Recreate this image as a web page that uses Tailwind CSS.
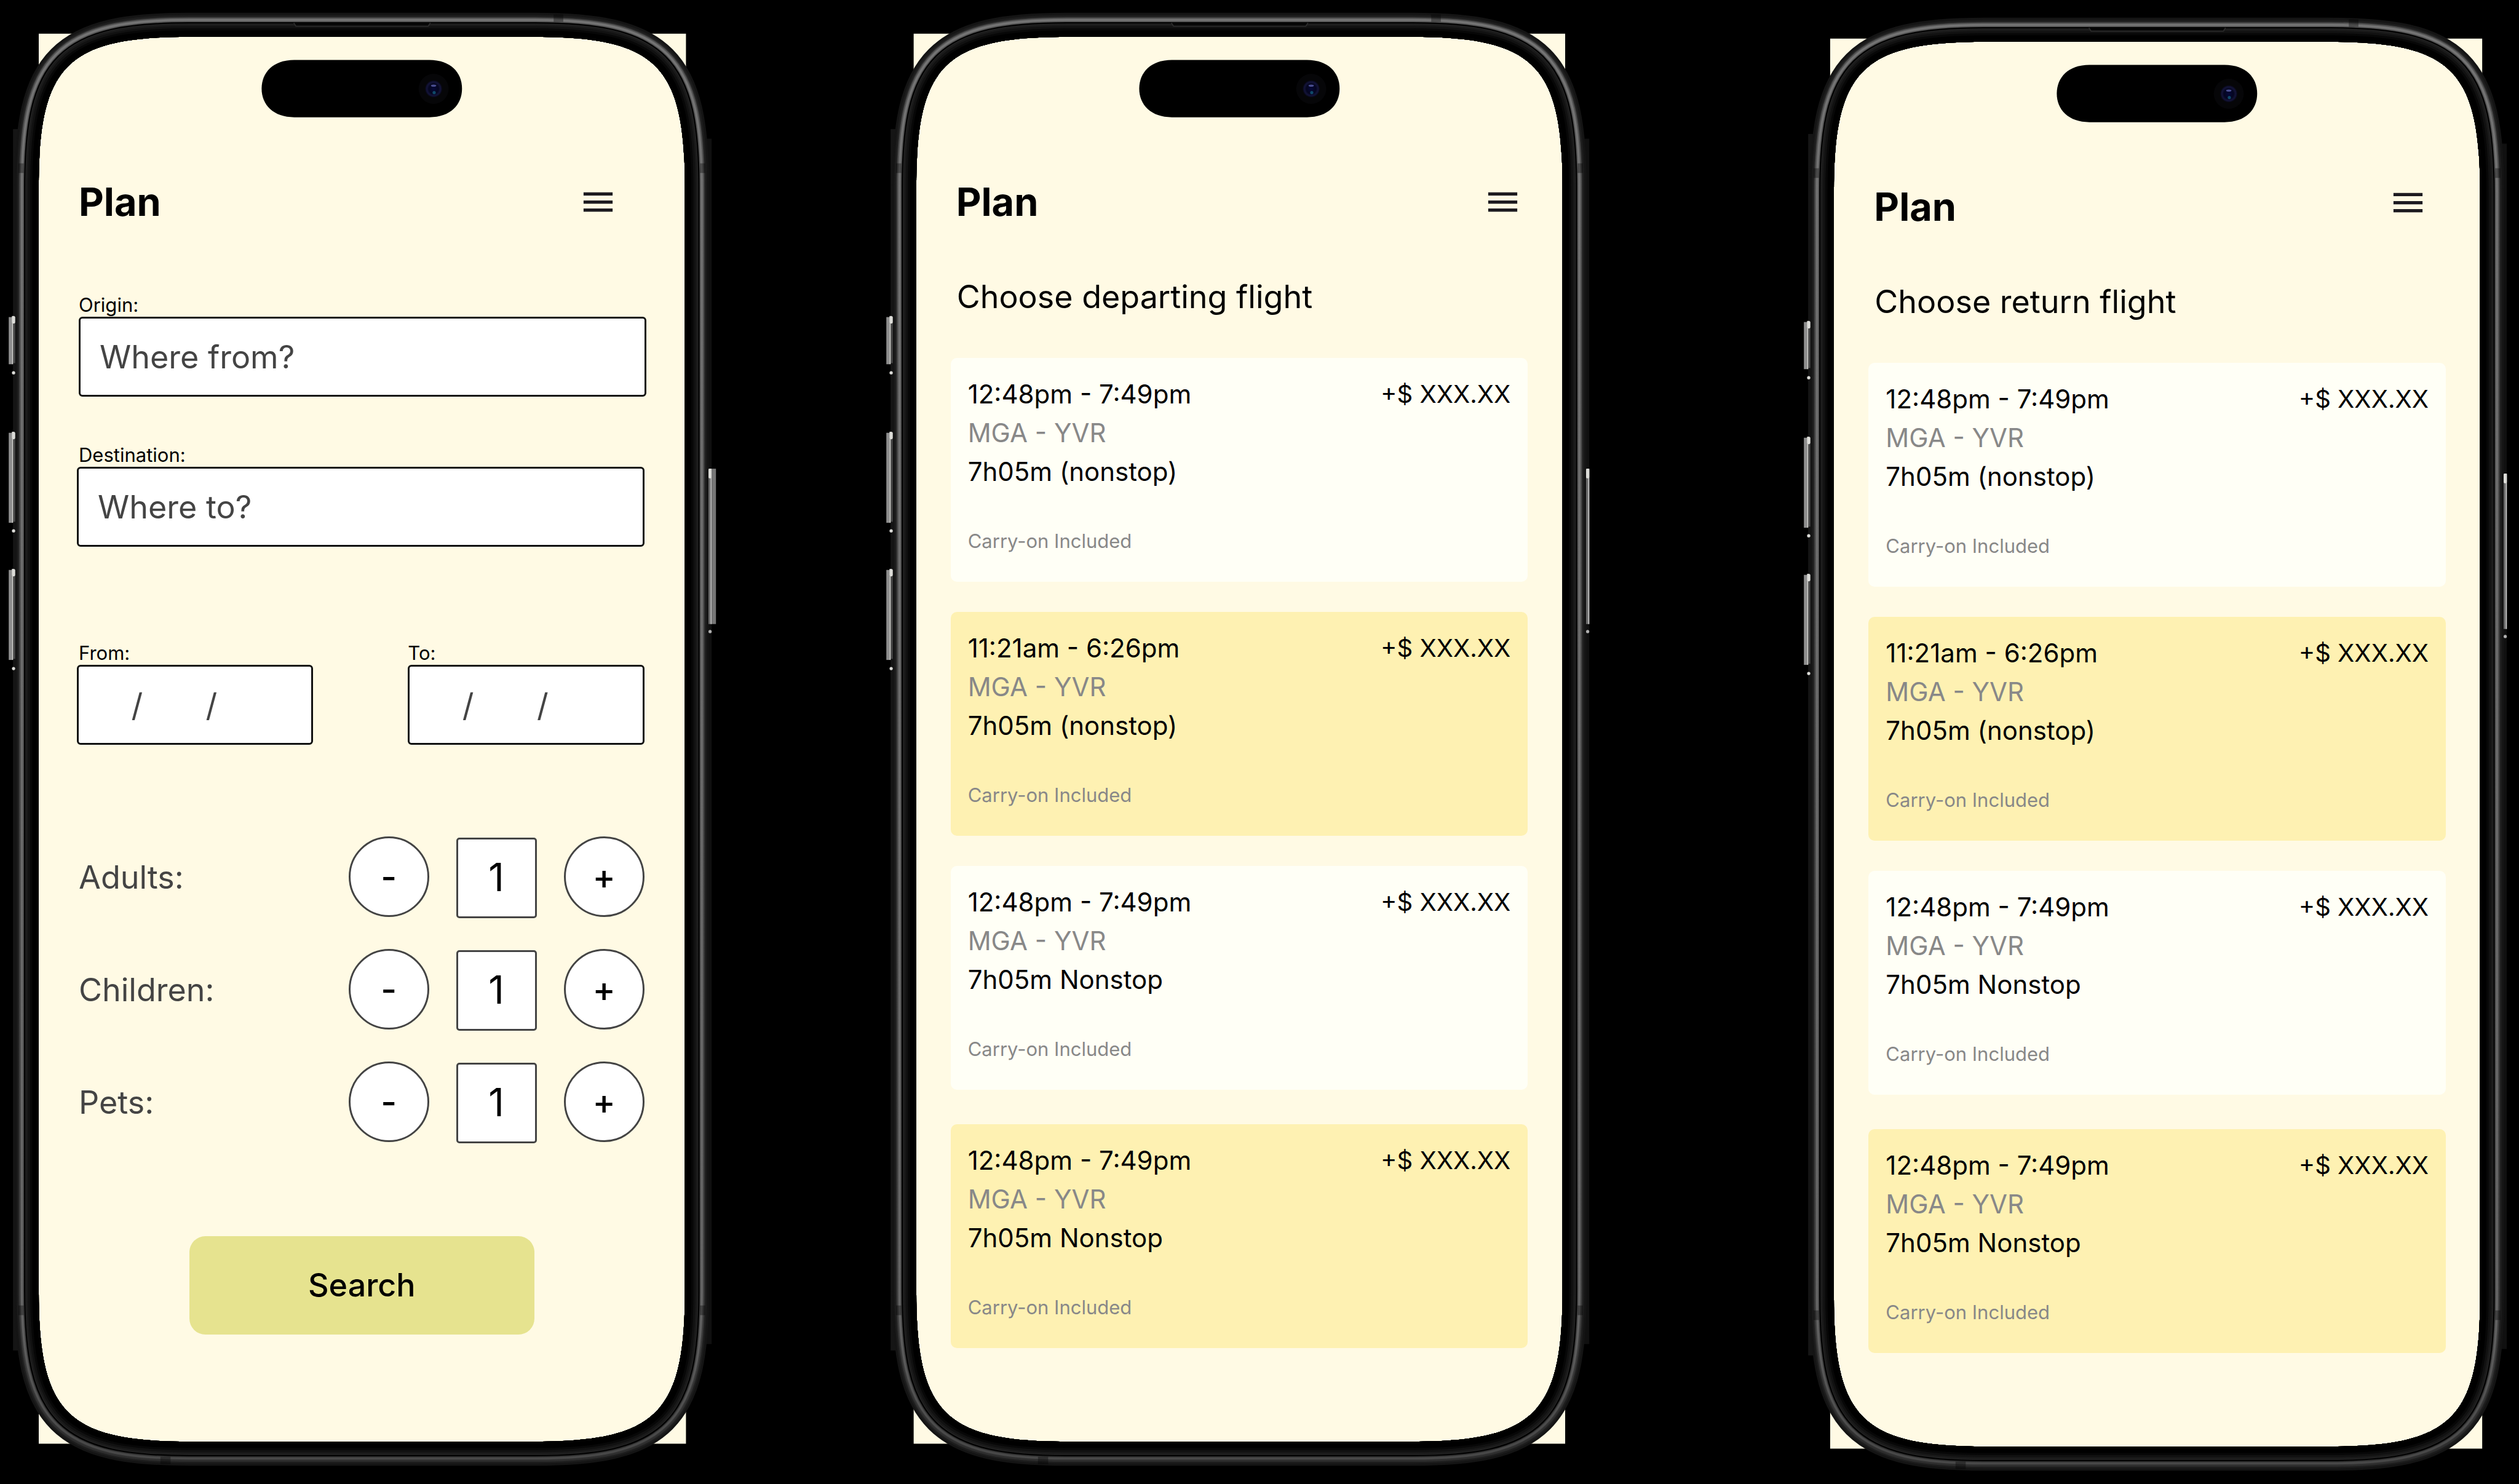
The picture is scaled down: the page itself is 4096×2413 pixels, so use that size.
<!DOCTYPE html>
<html lang="en">
<head>
<meta charset="utf-8">
<meta name="viewport" content="width=device-width, initial-scale=1">
<title>Plan</title>
<script src="https://cdn.jsdelivr.net/npm/@tailwindcss/browser@4"></script>
</head>
<body class="bg-black text-black font-[Inter,sans-serif]">

<!-- Shared phone artwork -->
<svg class="absolute size-0" aria-hidden="true">
  <defs>
    <linearGradient id="metal" gradientUnits="userSpaceOnUse" x1="0" y1="0" x2="0" y2="2622">
      <stop offset="0" stop-color="#747474"/><stop offset="0.9" stop-color="#666"/><stop offset="1" stop-color="#484848"/>
    </linearGradient>
    <linearGradient id="metal-edge" gradientUnits="userSpaceOnUse" x1="0" y1="0" x2="0" y2="2622">
      <stop offset="0" stop-color="#545454"/><stop offset="0.9" stop-color="#444"/><stop offset="1" stop-color="#303030"/>
    </linearGradient>
    <radialGradient id="lens">
      <stop offset="0" stop-color="#06083a"/><stop offset="0.55" stop-color="#05061f"/><stop offset="0.8" stop-color="#14143a"/><stop offset="1" stop-color="#060610"/>
    </radialGradient>
    <path id="outline" d="M280 0H926C1153 0 1206 53 1206 280V2342C1206 2569 1153 2622 926 2622H280C53 2622 0 2569 0 2342V280C0 53 53 0 280 0Z"/>
    <clipPath id="outside">
      <path clip-rule="evenodd" d="M-100 -100H1306V2722H-100ZM280 0H926C1153 0 1206 53 1206 280V2342C1206 2569 1153 2622 926 2622H280C53 2622 0 2569 0 2342V280C0 53 53 0 280 0Z"/>
    </clipPath>
    <g id="frame" fill="none">
      <rect x="-48" y="172" width="10" height="2280" fill="#151515"/>
      <rect x="1244" y="190" width="12" height="2250" fill="#101010"/>
      <use href="#outline" stroke="#141414" stroke-width="90"/>
      <use href="#outline" stroke="#1c1c1c" stroke-width="82"/>
      <use href="#outline" stroke="#2b2b2b" stroke-width="76"/>
      <use href="#outline" stroke="url(#metal-edge)" stroke-width="72"/>
      <use href="#outline" stroke="url(#metal)" stroke-width="67"/>
      <use href="#outline" stroke="url(#metal-edge)" stroke-width="59"/>
      <use href="#outline" stroke="#000" stroke-width="55"/>
      <use href="#outline" stroke="#242424" stroke-width="50"/>
      <use href="#outline" stroke="#1a1a1a" stroke-width="47"/>
      <use href="#outline" stroke="#111" stroke-width="40"/>
      <use href="#outline" stroke="#070707" stroke-width="32"/>
      <use href="#outline" stroke="#000" stroke-width="24"/>
      <path d="M476 -26L480 -20H727L731 -26" stroke="#2c2c2c" stroke-width="2" fill="#070707"/>
      <g fill="#000" fill-opacity="0.35">
        <rect x="961" y="-42" width="18" height="14"/>
        <rect x="-38" y="236" width="10" height="18"/><rect x="1234" y="236" width="10" height="18"/>
        <rect x="-38" y="2368" width="10" height="18"/><rect x="1234" y="2368" width="10" height="18"/>
        <rect x="227" y="2650" width="19" height="14"/>
      </g>
    </g>
    <g id="buttons">
      <g fill="#8e8e8e">
        <rect x="-56" y="523" width="6" height="88"/><rect x="-56" y="739" width="6" height="168"/><rect x="-56" y="995" width="6" height="168"/>
      </g>
      <g fill="#4a4a4a">
        <rect x="-48" y="523" width="4" height="86"/><rect x="-48" y="739" width="4" height="166"/><rect x="-48" y="995" width="4" height="166"/>
      </g>
      <g fill="#dcdcd8">
        <rect x="-50" y="521" width="2" height="90"/><rect x="-50" y="737" width="2" height="170"/><rect x="-50" y="993" width="2" height="170"/>
        <rect x="-50" y="521" width="6" height="14" rx="3"/><rect x="-50" y="737" width="6" height="14" rx="3"/><rect x="-50" y="993" width="6" height="14" rx="3"/>
        <circle cx="-47" cy="627" r="3"/><circle cx="-47" cy="922" r="3"/><circle cx="-47" cy="1179" r="3"/>
      </g>
      <rect x="1250" y="806" width="6" height="290" fill="#6a6a6a"/>
      <rect x="1254" y="806" width="2" height="290" fill="#c8c8c8"/>
      <rect x="1250" y="806" width="6" height="18" rx="2" fill="#dcdcd8"/>
      <circle cx="1253" cy="1110" r="3" fill="#b0b0b0"/>
    </g>
    <g id="island">
      <path d="M477 43H729C768 43 790 66 790 96.500S768 150 729 150H477C438 150 416 127 416 96.500S438 43 477 43Z" fill="#000"/>
      <circle cx="737" cy="97" r="28" fill="#060608"/>
      <circle cx="737" cy="97" r="16" fill="url(#lens)"/>
      <ellipse cx="737" cy="91" rx="5" ry="2" fill="#4a4e90"/>
      <circle cx="738" cy="104" r="3" fill="#0f4a6a"/>
    </g>
  </defs>
</svg>

<main class="flex min-h-screen items-start overflow-hidden pt-[60px] pr-[63px] pb-[61px] pl-[63px]">

  <!-- Search form -->
  <section class="relative flex-1 bg-[#fffae4] pt-[230px] pb-[174px]">
    <header class="flex h-[76px] items-center justify-between pr-[110px] pl-[65px]">
      <h1 class="text-[63px] leading-[76px] font-bold">Plan</h1>
      <button type="button" aria-label="Menu" class="size-[63px]">
        <svg viewBox="0 0 24 24" class="size-full" fill="#1d1b20"><path d="M3 18v-2h18v2H3Zm0-5v-2h18v2H3Zm0-5V6h18v2H3Z"/></svg>
      </button>
    </header>

    <form class="mt-[111px] pr-[66px] pl-[62px]">
      <div class="-mr-[3px] ml-[3px] flex flex-col">
        <label for="origin" class="text-[31px] leading-[38px]">Origin:</label>
        <input id="origin" type="text" placeholder="Where from?" class="h-[130px] w-full rounded-[6px] border-3 border-[#111] bg-white px-[31px] text-[52px] text-[#444] placeholder:text-[#444]">
      </div>

      <div class="mt-[76px] flex flex-col">
        <label for="destination" class="pl-[3px] text-[31px] leading-[38px]">Destination:</label>
        <input id="destination" type="text" placeholder="Where to?" class="h-[130px] w-full rounded-[6px] border-3 border-[#111] bg-white px-[31px] text-[52px] text-[#444] placeholder:text-[#444]">
      </div>

      <div class="mt-[154px] flex justify-between gap-[154px]">
        <div class="flex min-w-0 flex-1 flex-col">
          <label for="from" class="pl-[3px] text-[31px] leading-[38px]">From:</label>
          <input id="from" type="text" placeholder="&nbsp;&nbsp;&nbsp;&nbsp;/&nbsp;&nbsp;&nbsp;&nbsp;&nbsp;&nbsp;&nbsp;/" class="h-[130px] w-full rounded-[6px] border-3 border-[#111] bg-white px-[27px] text-[52px] text-[#444] placeholder:text-[#444]">
        </div>
        <div class="flex min-w-0 flex-1 flex-col">
          <label for="to" class="text-[31px] leading-[38px]">To:</label>
          <input id="to" type="text" placeholder="&nbsp;&nbsp;&nbsp;&nbsp;/&nbsp;&nbsp;&nbsp;&nbsp;&nbsp;&nbsp;&nbsp;/" class="h-[130px] w-full rounded-[6px] border-3 border-[#111] bg-white px-[27px] text-[52px] text-[#444] placeholder:text-[#444]">
        </div>
      </div>

      <div class="mt-[149px] flex flex-col gap-[50px]">
        <div class="flex h-[133px] items-center">
          <label for="adults" class="flex-1 pl-[3px] text-[52px] leading-[63px] text-[#444]">Adults:</label>
          <div class="flex h-full items-start gap-[44px]">
            <button type="button" aria-label="Fewer adults" class="size-[131px] rounded-full border-3 border-[#444] bg-white text-[56px] font-medium">-</button>
            <input id="adults" type="text" inputmode="numeric" value="1" class="size-[131px] self-end rounded-[5px] border-3 border-[#444] bg-white pb-[4px] text-center text-[63px]">
            <button type="button" aria-label="More adults" class="size-[131px] rounded-full border-3 border-[#444] bg-white text-[56px] font-medium">+</button>
          </div>
        </div>
        <div class="flex h-[133px] items-center">
          <label for="children" class="flex-1 pl-[3px] text-[52px] leading-[63px] text-[#444]">Children:</label>
          <div class="flex h-full items-start gap-[44px]">
            <button type="button" aria-label="Fewer children" class="size-[131px] rounded-full border-3 border-[#444] bg-white text-[56px] font-medium">-</button>
            <input id="children" type="text" inputmode="numeric" value="1" class="size-[131px] self-end rounded-[5px] border-3 border-[#444] bg-white pb-[4px] text-center text-[63px]">
            <button type="button" aria-label="More children" class="size-[131px] rounded-full border-3 border-[#444] bg-white text-[56px] font-medium">+</button>
          </div>
        </div>
        <div class="flex h-[133px] items-center">
          <label for="pets" class="flex-1 pl-[3px] text-[52px] leading-[63px] text-[#444]">Pets:</label>
          <div class="flex h-full items-start gap-[44px]">
            <button type="button" aria-label="Fewer pets" class="size-[131px] rounded-full border-3 border-[#444] bg-white text-[56px] font-medium">-</button>
            <input id="pets" type="text" inputmode="numeric" value="1" class="size-[131px] self-end rounded-[5px] border-3 border-[#444] bg-white pb-[4px] text-center text-[63px]">
            <button type="button" aria-label="More pets" class="size-[131px] rounded-full border-3 border-[#444] bg-white text-[56px] font-medium">+</button>
          </div>
        </div>
      </div>

      <div class="mt-[151px] flex justify-center pl-[4px]">
        <button type="submit" class="h-[160px] w-[561px] rounded-[26px] bg-[#e6e38f] text-[52px] font-medium">Search</button>
      </div>
    </form>

    <svg viewBox="0 0 1206 2622" preserveAspectRatio="none" class="pointer-events-none absolute inset-0 size-full overflow-visible" aria-hidden="true">
      <g clip-path="url(#outside)"><rect x="0" y="-6" width="1208" height="2632" fill="#fffae4"/><use href="#frame"/></g>
      <use href="#buttons"/>
      <rect x="1256" y="806" width="8" height="290" fill="#777"/>
      <use href="#island"/>
    </svg>
  </section>

  <!-- Departing flights -->
  <section class="relative ml-[376px] flex-1 bg-[#fffae4] pt-[230px] pb-[152px]">
    <header class="flex h-[76px] items-center justify-between pr-[65px] pl-[65px]">
      <h1 class="text-[63px] leading-[76px] font-bold">Plan</h1>
      <button type="button" aria-label="Menu" class="size-[63px]">
        <svg viewBox="0 0 24 24" class="size-full" fill="#1d1b20"><path d="M3 18v-2h18v2H3Zm0-5v-2h18v2H3Zm0-5V6h18v2H3Z"/></svg>
      </button>
    </header>
    <h2 class="mt-[85px] pl-[66px] text-[52px] leading-[63px]">Choose departing flight</h2>
    <ul class="mt-[68px] flex flex-col gap-[49px] px-[56px]">
      <li><button type="button" class="flex h-[364px] w-full items-start justify-between rounded-[10px] bg-[#fffff6] pt-[27px] pr-[28px] pl-[28px] text-left text-[42px] leading-[63px]">
        <span class="flex flex-col"><span>12:48pm - 7:49pm</span><span class="text-[#888]">MGA - YVR</span><span>7h05m (nonstop)</span><span class="mt-[63px] text-[31px] leading-[38px] text-[#888]">Carry-on Included</span></span>
        <span class="text-[40px]">+$ XXX.XX</span></button></li>
      <li><button type="button" class="flex h-[364px] w-full items-start justify-between rounded-[10px] bg-[#fef1b2] pt-[27px] pr-[28px] pl-[28px] text-left text-[42px] leading-[63px]">
        <span class="flex flex-col"><span>11:21am - 6:26pm</span><span class="text-[#888]">MGA - YVR</span><span>7h05m (nonstop)</span><span class="mt-[63px] text-[31px] leading-[38px] text-[#888]">Carry-on Included</span></span>
        <span class="text-[40px]">+$ XXX.XX</span></button></li>
      <li><button type="button" class="flex h-[364px] w-full items-start justify-between rounded-[10px] bg-[#fffff6] pt-[27px] pr-[28px] pl-[28px] text-left text-[42px] leading-[63px]">
        <span class="flex flex-col"><span>12:48pm - 7:49pm</span><span class="text-[#888]">MGA - YVR</span><span>7h05m Nonstop</span><span class="mt-[63px] text-[31px] leading-[38px] text-[#888]">Carry-on Included</span></span>
        <span class="text-[40px]">+$ XXX.XX</span></button></li>
      <li class="mt-[7px]"><button type="button" class="flex h-[364px] w-full items-start justify-between rounded-[10px] bg-[#fef1b2] pt-[27px] pr-[28px] pl-[28px] text-left text-[42px] leading-[63px]">
        <span class="flex flex-col"><span>12:48pm - 7:49pm</span><span class="text-[#888]">MGA - YVR</span><span>7h05m Nonstop</span><span class="mt-[63px] text-[31px] leading-[38px] text-[#888]">Carry-on Included</span></span>
        <span class="text-[40px]">+$ XXX.XX</span></button></li>
    </ul>
    <svg viewBox="0 0 1206 2622" preserveAspectRatio="none" class="pointer-events-none absolute inset-0 size-full overflow-visible" aria-hidden="true">
      <g clip-path="url(#outside)"><rect x="-5" y="-6" width="1216" height="2632" fill="#fffae4"/><use href="#frame"/></g>
      <use href="#buttons"/>
      <use href="#island"/>
    </svg>
  </section>

  <!-- Return flights -->
  <section class="relative mt-[8px] ml-[442px] flex-1 bg-[#fffae4] pt-[230px] pb-[152px]">
    <header class="flex h-[76px] items-center justify-between pr-[86px] pl-[65px]">
      <h1 class="text-[63px] leading-[76px] font-bold">Plan</h1>
      <button type="button" aria-label="Menu" class="size-[63px] self-start">
        <svg viewBox="0 0 24 24" class="size-full" fill="#1d1b20"><path d="M3 18v-2h18v2H3Zm0-5v-2h18v2H3Zm0-5V6h18v2H3Z"/></svg>
      </button>
    </header>
    <h2 class="mt-[85px] pl-[66px] text-[52px] leading-[63px]">Choose return flight</h2>
    <ul class="mt-[68px] flex flex-col gap-[49px] px-[56px]">
      <li><button type="button" class="flex h-[364px] w-full items-start justify-between rounded-[10px] bg-[#fffff6] pt-[27px] pr-[28px] pl-[28px] text-left text-[42px] leading-[63px]">
        <span class="flex flex-col"><span>12:48pm - 7:49pm</span><span class="text-[#888]">MGA - YVR</span><span>7h05m (nonstop)</span><span class="mt-[63px] text-[31px] leading-[38px] text-[#888]">Carry-on Included</span></span>
        <span class="text-[40px]">+$ XXX.XX</span></button></li>
      <li><button type="button" class="flex h-[364px] w-full items-start justify-between rounded-[10px] bg-[#fef1b2] pt-[27px] pr-[28px] pl-[28px] text-left text-[42px] leading-[63px]">
        <span class="flex flex-col"><span>11:21am - 6:26pm</span><span class="text-[#888]">MGA - YVR</span><span>7h05m (nonstop)</span><span class="mt-[63px] text-[31px] leading-[38px] text-[#888]">Carry-on Included</span></span>
        <span class="text-[40px]">+$ XXX.XX</span></button></li>
      <li><button type="button" class="flex h-[364px] w-full items-start justify-between rounded-[10px] bg-[#fffff6] pt-[27px] pr-[28px] pl-[28px] text-left text-[42px] leading-[63px]">
        <span class="flex flex-col"><span>12:48pm - 7:49pm</span><span class="text-[#888]">MGA - YVR</span><span>7h05m Nonstop</span><span class="mt-[63px] text-[31px] leading-[38px] text-[#888]">Carry-on Included</span></span>
        <span class="text-[40px]">+$ XXX.XX</span></button></li>
      <li class="mt-[7px]"><button type="button" class="flex h-[364px] w-full items-start justify-between rounded-[10px] bg-[#fef1b2] pt-[27px] pr-[28px] pl-[28px] text-left text-[42px] leading-[63px]">
        <span class="flex flex-col"><span>12:48pm - 7:49pm</span><span class="text-[#888]">MGA - YVR</span><span>7h05m Nonstop</span><span class="mt-[63px] text-[31px] leading-[38px] text-[#888]">Carry-on Included</span></span>
        <span class="text-[40px]">+$ XXX.XX</span></button></li>
    </ul>
    <svg viewBox="0 0 1206 2622" preserveAspectRatio="none" class="pointer-events-none absolute inset-0 size-full overflow-visible" aria-hidden="true">
      <g clip-path="url(#outside)"><rect x="-7" y="-6" width="1217" height="2632" fill="#fffae4"/><use href="#frame"/></g>
      <use href="#buttons"/>
      <use href="#island"/>
    </svg>
  </section>
</main>
</body>
</html>
